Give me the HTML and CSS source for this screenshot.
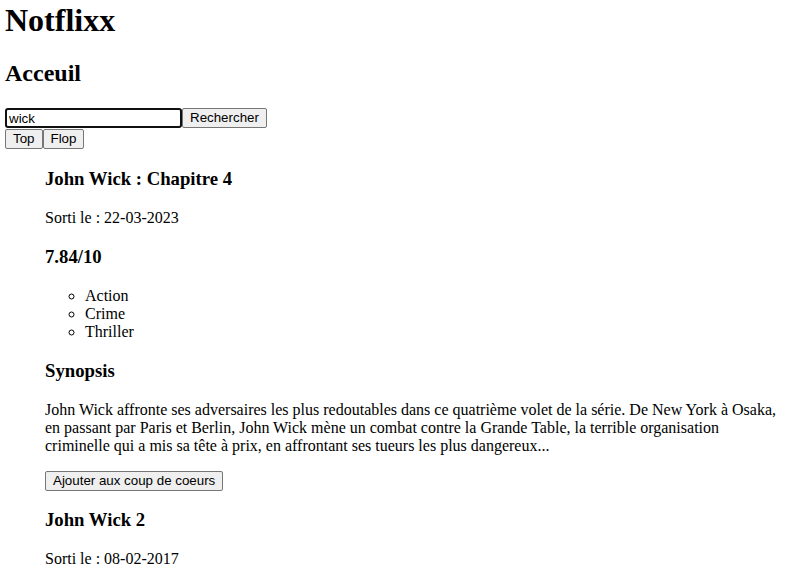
FILE: index.html
```html
<!DOCTYPE html>
<html lang="fr">
<head>
<meta charset="utf-8">
<title>Notflixx</title>
<link rel="stylesheet" href="styles.css">
</head>
<body>
<h1 class="logo">Notflixx</h1>
<h2 class="page-title">Acceuil</h2>
<form class="search"><input class="search-input" type="text" value="wick"><button class="btn" type="button">Rechercher</button></form>
<div class="sort"><button class="btn" type="button">Top</button><button class="btn" type="button">Flop</button></div>
<ul class="films">
  <li class="film">
    <h3 class="film-title">John Wick : Chapitre 4</h3>
    <p class="film-date">Sorti le : 22-03-2023</p>
    <h3 class="film-note">7.84/10</h3>
    <ul class="genres">
      <li>Action</li>
      <li>Crime</li>
      <li>Thriller</li>
    </ul>
    <h3 class="film-synopsis-title">Synopsis</h3>
    <p class="film-synopsis">John Wick affronte ses adversaires les plus redoutables dans ce quatrième volet de la série. De New York à Osaka, en passant par Paris et Berlin, John Wick mène un combat contre la Grande Table, la terrible organisation criminelle qui a mis sa tête à prix, en affrontant ses tueurs les plus dangereux...</p>
    <button class="btn" type="button">Ajouter aux coup de coeurs</button>
  </li>
  <li class="film">
    <h3 class="film-title">John Wick 2</h3>
    <p class="film-date">Sorti le : 08-02-2017</p>
  </li>
</ul>
</body>
</html>
```
FILE: styles.css
```css
html, body {
  background: #fff;
}
body {
  margin: 0;
  padding: 2px 5px 0 5px;
  font-family: "Liberation Serif", "Times New Roman", serif;
  font-size: 16px;
  color: #000;
}
.logo {
  font-size: 32px;
  margin: 0 0 21.44px 0;
}
.page-title {
  font-size: 24px;
  margin: 19.92px 0;
}
.search {
  margin: 0;
  padding-top: 1px;
  display: flex;
}
.search-input {
  box-sizing: border-box;
  width: 177px;
  height: 20px;
  margin: 0;
  padding: 0 2px;
  border: 2px solid #101010;
  border-radius: 3px;
  font-family: "Liberation Sans", Arial, sans-serif;
  font-size: 13.33px;
  color: #000;
  outline: none;
  background: #fff;
}
.btn {
  box-sizing: border-box;
  height: 20px;
  margin: 0;
  padding: 1px 7px;
  border: 1px solid #767676;
  border-radius: 2px;
  background: #efefef;
  font-family: "Liberation Sans", Arial, sans-serif;
  font-size: 13.33px;
  color: #000;
  line-height: 16px;
}
.sort {
  display: flex;
  margin-top: 1px;
}
.films {
  list-style: none;
  margin: 0;
  padding: 0 0 0 40px;
}
h3 {
  font-size: 18.72px;
  margin: 18.72px 0;
}
p {
  margin: 16px 0;
}
.genres {
  list-style: circle;
  margin: 16px 0;
  padding: 1px 0 0 40px;
}
```
